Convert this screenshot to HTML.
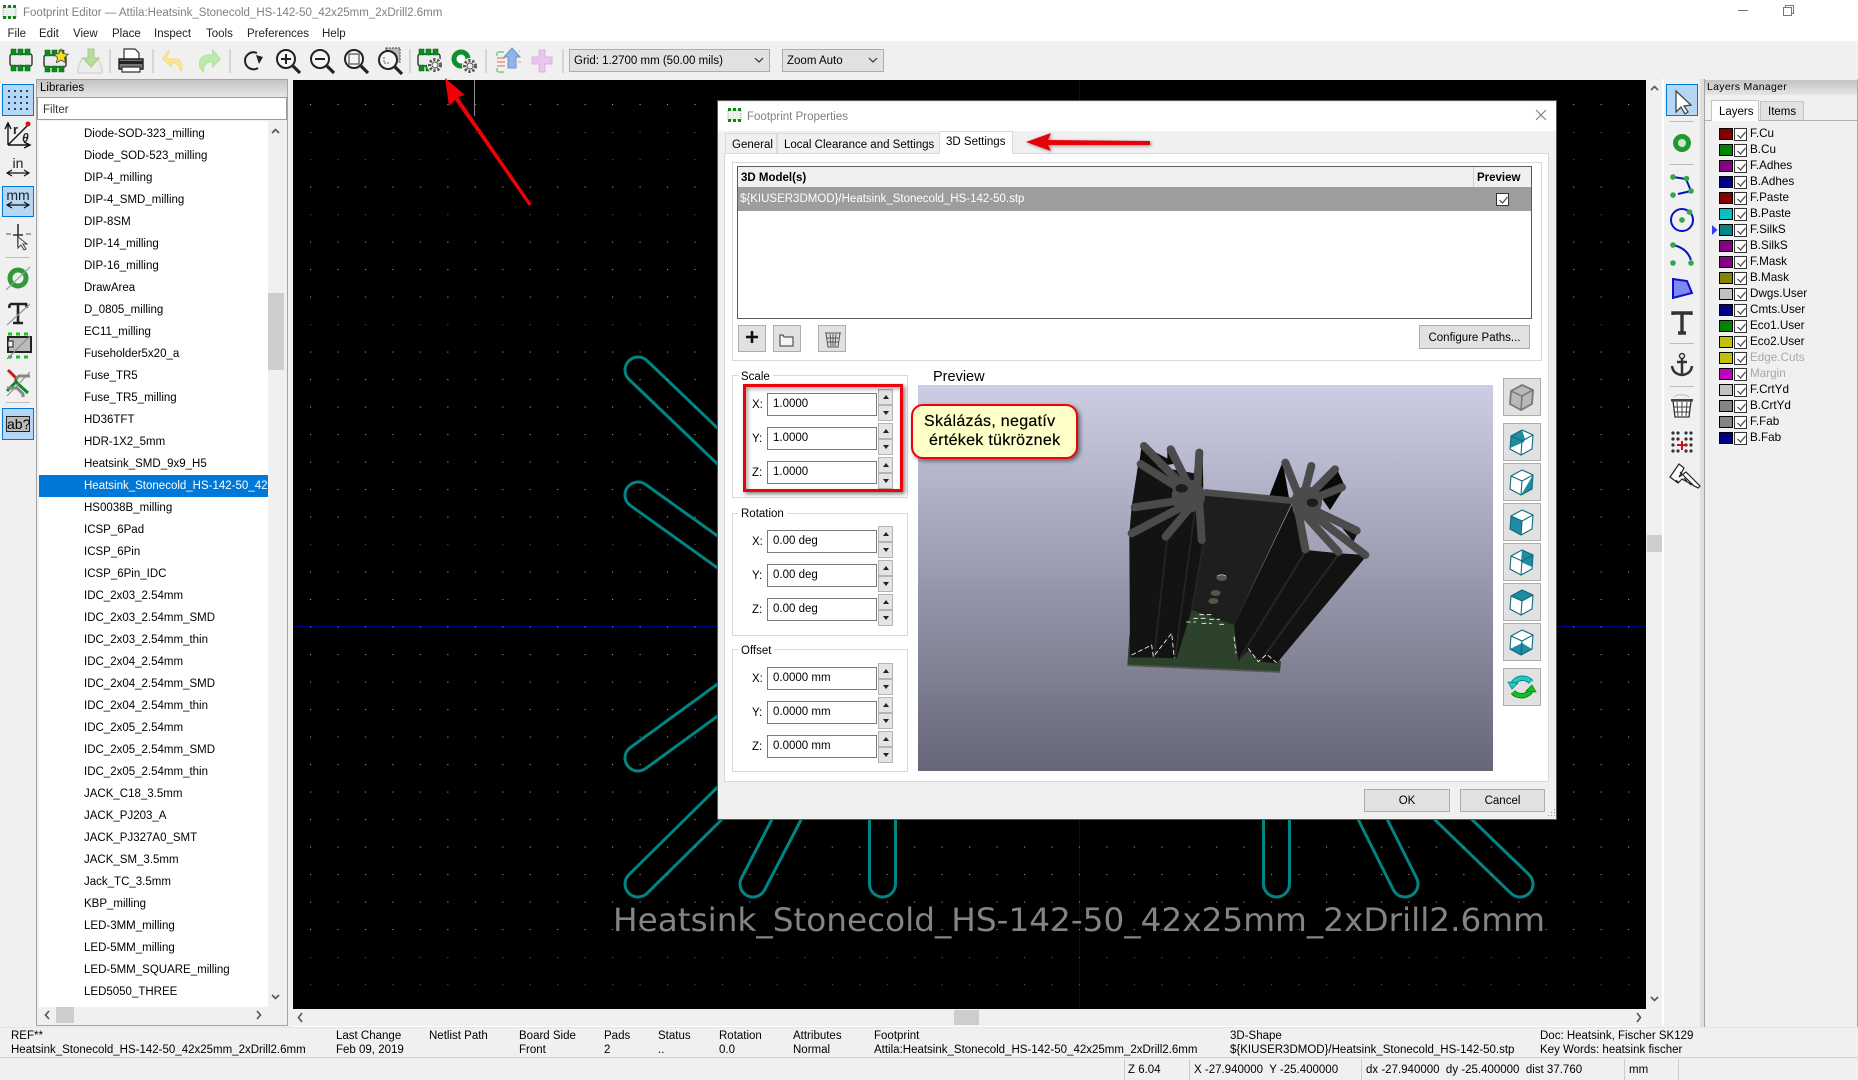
<!DOCTYPE html>
<html lang="en"><head><meta charset="utf-8"><title>Footprint Editor</title>
<style>
html,body{margin:0;padding:0;width:1858px;height:1080px;overflow:hidden;background:#f0f0f0}
body{position:relative;font:11.5px/16px "Liberation Sans",sans-serif;color:#000}
div,svg{position:absolute;box-sizing:border-box}
svg{overflow:visible}
.t{white-space:nowrap}
.hl{background:#b5d7f5;border:1.5px solid #0078d7}
.sep{background:#bbb}
.list{left:39px;top:121px;width:229px;height:886px;background:#fff;overflow:hidden;padding-top:2px}
.list div{position:relative;display:block;height:22px;line-height:22px;padding-left:45px;white-space:nowrap}
.list .sel{background:#0078d7;color:#fff}
.lrow{left:1719px;width:130px;height:16px}
.sw{left:0;top:2px;width:14px;height:12px;border:1px solid #000}
.cb{left:15px;top:2px;width:13px;height:13px;border:1px solid #333;background:#fff}
.ln{left:31px;top:0;line-height:16px;white-space:nowrap;font-size:11.7px}
.grp{left:732px;width:176px;height:123px;border:1px solid #d9d9d9}
.gl{background:#fff;padding:0 3px;white-space:nowrap;left:738px;height:14px;line-height:16px}
.inp{left:767px;width:110px;height:23px;border:1px solid #7a7a7a;background:#fff;padding-left:5px;line-height:21px;white-space:nowrap}
.xl{left:752px;white-space:nowrap;margin-top:1px}
.sp{left:878px;width:15px;height:16px;background:#e4e4e4;border:1px solid #b4b4b4}
.sp:before{content:"";position:absolute;left:4px;top:5px;border-left:3px solid transparent;border-right:3px solid transparent;border-bottom:4px solid #222}
.sp.d:before{border-bottom:0;border-top:4px solid #222}
.btn{background:#e1e1e1;border:1px solid #adadad;text-align:center}
.v3{left:1503px;width:38px;height:38px;background:#e1e1e1;border:1.5px solid #adadad}
.msg{white-space:nowrap;line-height:15px}
.sbs{top:1059px;width:1px;height:21px;background:#ccc}
</style></head><body>

<!-- window chrome -->
<div style="left:0;top:0;width:1858px;height:41px;background:#fff"></div>
<div class="t" style="left:23px;top:4.5px;color:#808080">Footprint Editor — Attila:Heatsink_Stonecold_HS-142-50_42x25mm_2xDrill2.6mm</div>
<div class="t" style="left:7.5px;top:26px;color:#222">File</div>
<div class="t" style="left:39px;top:26px;color:#222">Edit</div>
<div class="t" style="left:73px;top:26px;color:#222">View</div>
<div class="t" style="left:112px;top:26px;color:#222">Place</div>
<div class="t" style="left:154px;top:26px;color:#222">Inspect</div>
<div class="t" style="left:206px;top:26px;color:#222">Tools</div>
<div class="t" style="left:247px;top:26px;color:#222">Preferences</div>
<div class="t" style="left:322px;top:26px;color:#222">Help</div>
<svg style="left:0;top:0" width="1858" height="30">
<path d="M1738 10.5h10" stroke="#777" fill="none"/>
<path d="M1783.5 7.5h8v8h-8zM1785.5 7.5v-2h8v8h-2" stroke="#777" fill="none"/>
<g transform="translate(2,4)"><rect x="1" y="3" width="13" height="10" fill="#eee" stroke="#999" stroke-dasharray="1 1"/><path d="M1 1h3v3H1zM6 1h3v3H6zM11 1h3v3h-3zM1 12h3v3H1zM6 12h3v3H6zM11 12h3v3h-3z" fill="#0a8a0a"/></g>
</svg>

<!-- top toolbar -->
<svg style="left:0;top:0" width="1858" height="80" fill="none">
<defs>
<g id="chip"><rect x="-11" y="-6" width="22" height="12" rx="2" fill="#ececec" stroke="#333" stroke-width="1.4"/>
<path d="M-10-11h5v6h-5zM-3-11h5v6h-5zM4-11h5v6H4zM-10 5h5v6h-5zM-3 5h5v6h-5zM4 5h5v6H4z" fill="#0b8f0b" stroke="#063" stroke-width=".6"/></g>
<g id="mag"><circle cx="-2" cy="-2" r="9" fill="#f6f6f6" stroke="#222" stroke-width="2"/><path d="M5 5l7 7" stroke="#222" stroke-width="3.2"/></g>
<g id="gear"><circle r="8" fill="#f0f0f0"/><circle r="5.5" fill="none" stroke="#555" stroke-width="3" stroke-dasharray="2.2 1.8"/><circle r="3" fill="#eee" stroke="#555"/></g>
</defs>
<use href="#chip" x="21" y="60"/>
<use href="#chip" x="55" y="61"/><path d="M61 49l2.2 4.6 5 .6-3.7 3.4 1 5-4.5-2.5-4.5 2.5 1-5-3.7-3.4 5-.6z" fill="#f4dc1e" stroke="#444" stroke-width=".8"/>
<path d="M78 74l4-10h16l4 10v5H78z" fill="#ececec" stroke="#ccc" transform="translate(0,-6)"/><path d="M88 49h6v9h5l-8 9-8-9h5z" fill="#b6dd9a" stroke="#a2cc88"/>
<rect x="109.500" y="49" width="1" height="24" fill="#bbb"/>
<g transform="translate(131,60)"><path d="M-7-11h11l4 4v7H-7z" fill="#fff" stroke="#333" stroke-width="1.2"/><path d="M-12-1h24v10h-24z" fill="#777" stroke="#222" stroke-width="1.4"/><path d="M-12 1h24v3h-24z" fill="#222"/><path d="M-9 7h18v5H-9z" fill="#fff" stroke="#333" stroke-width="1.2"/></g>
<rect x="152.500" y="49" width="1" height="24" fill="#bbb"/>
<path transform="translate(3.500,0)" d="M166 50l-3 8 3 1h8q6 3 4 12q-1 0-3-5q-2-3-7-3v4l-9-8.500z" fill="#fbe58e" stroke="#f2dc86"/>
<path transform="translate(-3.500,0)" d="M216 50l8 9-8 8v-5h-3q-6 1-6 10q-5-4-4-10q1-7 10-7h3z" fill="#bfe9aa" stroke="#b0e29e"/>
<rect x="229.500" y="49" width="1" height="24" fill="#bbb"/>
<path d="M257 53a8.500 8.500 0 1 0 1 15" stroke="#222" stroke-width="2"/><path d="M257 58l3 9 4-7z" fill="#222" transform="translate(-1,-3)"/>
<use href="#mag" x="288" y="61"/><path d="M281 59h10M286 54v10" stroke="#222" stroke-width="2"/>
<use href="#mag" x="322" y="61"/><path d="M315 59h10" stroke="#222" stroke-width="2"/>
<use href="#mag" x="356" y="61"/><rect x="349" y="54" width="10" height="10" stroke="#666" stroke-width="1.4"/>
<rect x="386" y="48" width="14" height="14" fill="#bbb" stroke="#444" stroke-dasharray="2 1"/>
<use href="#mag" x="390" y="62"/><path d="M384 57v6h6" stroke="#666" stroke-dasharray="2 1"/>
<rect x="409.500" y="49" width="1" height="24" fill="#bbb"/>
<use href="#chip" x="429" y="60"/><use href="#gear" x="435" y="65"/>
<circle cx="461" cy="59" r="7" stroke="#0c8f2c" stroke-width="5" fill="#fff"/><use href="#gear" x="470" y="66"/>
<rect x="485.500" y="49" width="1" height="24" fill="#bbb"/>
<path d="M498 52h6M498 72h6M497 52v4M497 68v4" stroke="#7cc48a" stroke-width="1.5"/><path d="M497 58h8M497 62h8M497 66h8" stroke="#e09a7a" stroke-width="1.5"/><path d="M512 48l8 9h-4v11h-8V57h-4z" fill="#8fb5e8" stroke="#6a94cc"/><path d="M519 51h1M518 62h3" stroke="#e09a7a"/>
<path d="M539 50h6v7h7v7h-7v8h-6v-8h-7v-7h7z" fill="#e9c4ee" stroke="#dcb2e2"/>
<rect x="562.500" y="49" width="1" height="24" fill="#bbb"/>
</svg>
<div style="left:569px;top:49px;width:201px;height:23px;background:#e1e1e1;border:1px solid #adadad;padding:4px 4px;white-space:nowrap;line-height:15px">Grid: 1.2700 mm (50.00 mils)</div>
<div style="left:782px;top:49px;width:102px;height:23px;background:#e1e1e1;border:1px solid #adadad;padding:4px 4px;white-space:nowrap;line-height:15px">Zoom Auto</div>
<svg style="left:0;top:0" width="1858" height="80" fill="none"><path d="M755 58l4 4 4-4M869 58l4 4 4-4" stroke="#333" stroke-width="1.2"/></svg>

<!-- left toolbar -->
<div class="hl" style="left:2px;top:84px;width:32px;height:32px"></div>
<div class="hl" style="left:2px;top:186px;width:32px;height:31px"></div>
<div class="sep" style="left:6px;top:257px;width:24px;height:1px"></div>
<div class="sep" style="left:6px;top:402px;width:24px;height:1px"></div>
<div class="hl" style="left:2px;top:408px;width:32px;height:32px"></div>
<svg style="left:0;top:80px" width="36" height="370" fill="none">
<g fill="#24476a"><rect x="8" y="10" width="2" height="2"/><rect x="14" y="10" width="2" height="2"/><rect x="20" y="10" width="2" height="2"/><rect x="26" y="10" width="2" height="2"/>
<rect x="8" y="16" width="2" height="2"/><rect x="14" y="16" width="2" height="2"/><rect x="20" y="16" width="2" height="2"/><rect x="26" y="16" width="2" height="2"/>
<rect x="8" y="22" width="2" height="2"/><rect x="14" y="22" width="2" height="2"/><rect x="20" y="22" width="2" height="2"/><rect x="26" y="22" width="2" height="2"/>
<rect x="8" y="28" width="2" height="2"/><rect x="14" y="28" width="2" height="2"/><rect x="20" y="28" width="2" height="2"/><rect x="26" y="28" width="2" height="2"/></g>
<path d="M8 65V44M5 49l3-6 3 6M8 65h21M24 62l6 3-6 3M8 65L27 46" stroke="#111" stroke-width="1.4"/><circle cx="28" cy="44" r="2.500" fill="#e01010"/>
<text x="13" y="54" font-family="Liberation Sans" font-size="13" font-weight="bold" fill="#222">r</text>
<text x="22" y="62" font-family="Liberation Sans" font-size="12" font-weight="bold" font-style="italic" fill="#222">θ</text>
<path d="M8 93h20M12 90l-5 3 5 3M24 90l5 3-5 3M8 125h20M12 122l-5 3 5 3M24 122l5 3-5 3" stroke="#111" stroke-width="1.200"/>
<text x="18" y="88" text-anchor="middle" font-family="Liberation Sans" font-size="14" fill="#222">in</text>
<text x="18" y="120" text-anchor="middle" font-family="Liberation Sans" font-size="14" fill="#222">mm</text>
<path d="M13 155h10M18 144v20M18 167v-4" stroke="#333" stroke-width="1.6"/><path d="M6 154h5M26 154h5" stroke="#888" stroke-width="1.6"/><path d="M18 157v11l3-3 3 5 2-1-3-5h4z" fill="#eee" stroke="#444"/>
<circle cx="18" cy="198" r="8" stroke="#2f9a3a" stroke-width="5" fill="#e8f4e8"/><path d="M6 210L30 187" stroke="#999" stroke-width="1.2"/>
<path d="M10 224h16l1 4M10 224l-1 4M18 224v19M13 243h10" stroke="#222" stroke-width="2.6"/><path d="M7 245L30 224" stroke="#999" stroke-width="1.2"/>
<rect x="8" y="257" width="23" height="15" fill="#bbb" stroke="#222" stroke-width="2"/><rect x="8" y="261" width="5" height="6" fill="#eee" stroke="#222"/><path d="M8 254h4M16 254h4M24 254h4M8 277h4M16 277h4M24 277h4" stroke="#1bc41b" stroke-width="3"/><path d="M7 279L30 256" stroke="#888" stroke-width="1.2"/>
<path d="M8 290l8 8 0 6 " stroke="#c02020" stroke-width="3"/><path d="M30 296H19l-3 3" stroke="#888" stroke-width="3"/><path d="M7 311l9-9 12 11" stroke="#0b8a2a" stroke-width="3"/><path d="M7 308h10l6 6v3" stroke="#888" stroke-width="3"/><path d="M7 316L30 292" stroke="#888" stroke-width="1"/>
</svg>
<div style="left:6px;top:416px;width:24px;height:16px;background:#bbb;border:1px solid #222;font-size:14px;line-height:14px;text-align:center;color:#000">ab?</div>

<!-- libraries panel -->
<div style="left:36px;top:79px;width:252px;height:947px;background:#f0f0f0;border:1.5px solid #a5a5a5"></div>
<div style="left:37px;top:80px;width:250px;height:17px;background:linear-gradient(#c4c4c4,#e6e6e6)"></div>
<div class="t" style="left:40px;top:78.5px;line-height:18px">Libraries</div>
<div style="left:37px;top:97px;width:250px;height:23px;background:#fff;border:1px solid #9a9a9a;padding:4px 5px;color:#333">Filter</div>
<div class="list">
<div>Diode-SOD-323_milling</div><div>Diode_SOD-523_milling</div><div>DIP-4_milling</div><div>DIP-4_SMD_milling</div><div>DIP-8SM</div><div>DIP-14_milling</div><div>DIP-16_milling</div><div>DrawArea</div><div>D_0805_milling</div><div>EC11_milling</div><div>Fuseholder5x20_a</div><div>Fuse_TR5</div><div>Fuse_TR5_milling</div><div>HD36TFT</div><div>HDR-1X2_5mm</div><div>Heatsink_SMD_9x9_H5</div><div class="sel">Heatsink_Stonecold_HS-142-50_42x25mm_2xDrill2.6mm</div><div>HS0038B_milling</div><div>ICSP_6Pad</div><div>ICSP_6Pin</div><div>ICSP_6Pin_IDC</div><div>IDC_2x03_2.54mm</div><div>IDC_2x03_2.54mm_SMD</div><div>IDC_2x03_2.54mm_thin</div><div>IDC_2x04_2.54mm</div><div>IDC_2x04_2.54mm_SMD</div><div>IDC_2x04_2.54mm_thin</div><div>IDC_2x05_2.54mm</div><div>IDC_2x05_2.54mm_SMD</div><div>IDC_2x05_2.54mm_thin</div><div>JACK_C18_3.5mm</div><div>JACK_PJ203_A</div><div>JACK_PJ327A0_SMT</div><div>JACK_SM_3.5mm</div><div>Jack_TC_3.5mm</div><div>KBP_milling</div><div>LED-3MM_milling</div><div>LED-5MM_milling</div><div>LED-5MM_SQUARE_milling</div><div>LED5050_THREE</div>
</div>
<div style="left:268px;top:121px;width:16px;height:886px;background:#f0f0f0"></div>
<div style="left:268px;top:293px;width:16px;height:77px;background:#cdcdcd"></div>
<div style="left:56px;top:1007px;width:18px;height:16px;background:#cdcdcd"></div>
<svg style="left:0;top:0" width="300" height="1080" fill="none" stroke="#555" stroke-width="1.6"><path d="M272 133l3.500-3.500 3.500 3.500M272 995l3.500 3.500 3.500-3.500M49 1011l-3.500 4 3.500 4M257 1011l3.500 4-3.500 4"/></svg>

<!-- canvas -->
<svg style="left:293px;top:80px" width="1353" height="929" viewBox="293 80 1353 929" fill="none">
<defs><pattern id="d" x="310" y="104" width="27.46" height="27.5" patternUnits="userSpaceOnUse"><rect width="1.1" height="1.1" fill="#9a9a9a"/></pattern></defs>
<rect x="293" y="80" width="1353" height="929" fill="#000"/>
<path d="M1079.500 80v929M293 626.500h1353" stroke="#000084" stroke-width="1"/>
<path d="M474.500 80v36" stroke="#8a8a8a" stroke-width="1"/>
<g stroke-linecap="round">
<g stroke="#008484" stroke-width="29">
<path d="M638 370L800 525M638 495L800 611M638 758L800 640M638 884L800 724M753 884L805 784M882.500 884V800M1276.500 884V800M1405 884L1355 784M1520 884L1400 768"/></g>
<g stroke="#000" stroke-width="23">
<path d="M638 370L800 525M638 495L800 611M638 758L800 640M638 884L800 724M753 884L805 784M882.500 884V800M1276.500 884V800M1405 884L1355 784M1520 884L1400 768"/></g>
</g>
<rect x="293" y="80" width="1353" height="929" fill="url(#d)"/>
<text x="613" y="931" font-family="DejaVu Sans" font-size="32" fill="#848484" textLength="932" lengthAdjust="spacingAndGlyphs">Heatsink_Stonecold_HS-142-50_42x25mm_2xDrill2.6mm</text>
</svg>

<!-- canvas scrollbars -->
<div style="left:1647px;top:535px;width:15px;height:17px;background:#cdcdcd"></div>
<div style="left:954px;top:1010px;width:25px;height:15px;background:#cdcdcd"></div>
<div style="left:1662px;top:79px;width:2px;height:947px;background:#fff"></div>
<div style="left:293px;top:1026px;width:1353px;height:1px;background:#fff"></div>
<svg style="left:0;top:0" width="1858" height="1080" fill="none" stroke="#555" stroke-width="1.6"><path d="M1651 90l3.500-3.500 3.500 3.500M1651 997l3.500 3.500 3.500-3.500M302 1013l-3.500 4.500 3.500 4.500M1637 1013l3.500 4.500-3.500 4.500"/></svg>

<!-- right toolbar -->
<div class="hl" style="left:1666px;top:84px;width:32px;height:32px"></div>
<div class="sep" style="left:1670px;top:121px;width:24px;height:1px"></div>
<div class="sep" style="left:1670px;top:164px;width:24px;height:1px"></div>
<div class="sep" style="left:1670px;top:343px;width:24px;height:1px"></div>
<div class="sep" style="left:1670px;top:386px;width:24px;height:1px"></div>
<div style="left:1700px;top:79px;width:4px;height:948px;background:#dedede"></div>
<svg style="left:0;top:0" width="1858" height="1080" fill="none">
<path d="M1676 91l0 21 5-5 4 7 3-2-4-6 7-1z" fill="#fff" stroke="#444" stroke-width="1.3"/>
<circle cx="1682" cy="143" r="6.500" stroke="#1f9a2e" stroke-width="5" fill="#cfe8cf"/>
<path d="M1673 177l13 2 5 12-13 3" stroke="#0a10c8" stroke-width="2"/><g fill="#2fa84a"><circle cx="1673" cy="177" r="2.800"/><circle cx="1686.500" cy="178.500" r="2.800"/><circle cx="1691" cy="191" r="2.800"/><circle cx="1673" cy="195" r="2.800"/></g>
<circle cx="1682" cy="220" r="11" stroke="#0a10c8" stroke-width="2"/><circle cx="1682" cy="220" r="2.800" fill="#2fa84a"/><circle cx="1689.500" cy="212" r="2.800" fill="#2fa84a"/>
<path d="M1673 245q14 3 18 15" stroke="#0a10c8" stroke-width="2"/><circle cx="1673" cy="245" r="2.800" fill="#2fa84a"/><circle cx="1691" cy="263" r="2.800" fill="#2fa84a"/><circle cx="1673" cy="263" r="2.800" fill="#2fa84a"/>
<path d="M1673 279l14 2 5 12-19 5z" fill="#7d88f2" stroke="#0a10c8" stroke-width="2"/>
<path d="M1673 315v-2h18v2M1682 313v20M1678 333h8" stroke="#333" stroke-width="3.400"/>
<circle cx="1682" cy="356" r="2.500" stroke="#333" stroke-width="1.500"/><path d="M1682 359v15M1677 362h10" stroke="#333" stroke-width="2.500"/><path d="M1672 366q1 8 10 9q9-1 10-9" stroke="#333" stroke-width="2.500"/>
<path d="M1673 401h18l-2 16h-14z" fill="#fff" stroke="#333" stroke-width="1.300"/><path d="M1671 399h22v2.500h-22z" fill="#444"/><path d="M1677 402l1 14M1682 402v14M1687 402l-1 14M1674 407h16M1675 412h14" stroke="#444"/><path d="M1674 397q3-3 7-2q5-1 8 2" stroke="#bbb"/>
<g fill="#333"><circle cx="1673" cy="433" r="1.600"/><circle cx="1678" cy="433" r="1.600"/><circle cx="1686" cy="433" r="1.600"/><circle cx="1691" cy="433" r="1.600"/><circle cx="1673" cy="439" r="1.600"/><circle cx="1678" cy="439" r="1.600"/><circle cx="1686" cy="439" r="1.600"/><circle cx="1691" cy="439" r="1.600"/><circle cx="1673" cy="445" r="1.600"/><circle cx="1686" cy="445" r="1.600"/><circle cx="1691" cy="445" r="1.600"/><circle cx="1673" cy="451" r="1.600"/><circle cx="1678" cy="451" r="1.600"/><circle cx="1686" cy="451" r="1.600"/><circle cx="1691" cy="451" r="1.600"/></g><path d="M1682 441v9M1677 445h10" stroke="#d01010" stroke-width="2"/>
<path d="M1670 477l9-13 5 4-5 9 7-5 14 14-2 2-16-9-4 4zM1680 472l14 14M1676 480l3 3M1684 478l3 3M1688 482l3 3" stroke="#222" stroke-width="1.200" fill="#fff"/>
</svg>

<!-- layers manager -->
<div style="left:1704px;top:79px;width:154px;height:948px;background:#f0f0f0;border-left:1.5px solid #a5a5a5;border-right:1px solid #aaa"></div>
<div style="left:1705px;top:80px;width:152px;height:15px;background:linear-gradient(#c4c4c4,#e6e6e6)"></div>
<div class="t" style="left:1707px;top:79px;line-height:17px;font-size:10.5px;letter-spacing:.3px">Layers Manager</div>
<div style="left:1705px;top:120px;width:152px;height:1px;background:#b0b0b0"></div>
<div style="left:1711px;top:100px;width:48px;height:21px;background:#fff;border:1px solid #c4c4c4;border-bottom:0;padding-left:7px;line-height:22px">Layers</div>
<div style="left:1760px;top:101px;width:44px;height:19px;background:#e2e2e2;border:1px solid #c4c4c4;border-bottom:0;padding-left:7px;line-height:21px">Items</div>
<svg style="left:1712px;top:225px" width="6" height="10"><path d="M0 0l5.500 5-5.500 5z" fill="#3a3af0"/></svg>
<svg width="0" height="0" style="left:0;top:0"><defs><path id="ck" d="M2.500 6l3 3 5-6" fill="none" stroke="#444" stroke-width="1.200"/></defs></svg>
<div class="lrow" style="top:126px"><div class="sw" style="background:#840000"></div><div class="cb"><svg width="12" height="12"><use href="#ck"/></svg></div><div class="ln">F.Cu</div></div>
<div class="lrow" style="top:142px"><div class="sw" style="background:#008400"></div><div class="cb"><svg width="12" height="12"><use href="#ck"/></svg></div><div class="ln">B.Cu</div></div>
<div class="lrow" style="top:158px"><div class="sw" style="background:#840084"></div><div class="cb"><svg width="12" height="12"><use href="#ck"/></svg></div><div class="ln">F.Adhes</div></div>
<div class="lrow" style="top:174px"><div class="sw" style="background:#000084"></div><div class="cb"><svg width="12" height="12"><use href="#ck"/></svg></div><div class="ln">B.Adhes</div></div>
<div class="lrow" style="top:190px"><div class="sw" style="background:#840000"></div><div class="cb"><svg width="12" height="12"><use href="#ck"/></svg></div><div class="ln">F.Paste</div></div>
<div class="lrow" style="top:206px"><div class="sw" style="background:#00c2c2"></div><div class="cb"><svg width="12" height="12"><use href="#ck"/></svg></div><div class="ln">B.Paste</div></div>
<div class="lrow" style="top:222px"><div class="sw" style="background:#008484"></div><div class="cb"><svg width="12" height="12"><use href="#ck"/></svg></div><div class="ln">F.SilkS</div></div>
<div class="lrow" style="top:238px"><div class="sw" style="background:#840084"></div><div class="cb"><svg width="12" height="12"><use href="#ck"/></svg></div><div class="ln">B.SilkS</div></div>
<div class="lrow" style="top:254px"><div class="sw" style="background:#840084"></div><div class="cb"><svg width="12" height="12"><use href="#ck"/></svg></div><div class="ln">F.Mask</div></div>
<div class="lrow" style="top:270px"><div class="sw" style="background:#848400"></div><div class="cb"><svg width="12" height="12"><use href="#ck"/></svg></div><div class="ln">B.Mask</div></div>
<div class="lrow" style="top:286px"><div class="sw" style="background:#c2c2c2"></div><div class="cb"><svg width="12" height="12"><use href="#ck"/></svg></div><div class="ln">Dwgs.User</div></div>
<div class="lrow" style="top:302px"><div class="sw" style="background:#000084"></div><div class="cb"><svg width="12" height="12"><use href="#ck"/></svg></div><div class="ln">Cmts.User</div></div>
<div class="lrow" style="top:318px"><div class="sw" style="background:#008400"></div><div class="cb"><svg width="12" height="12"><use href="#ck"/></svg></div><div class="ln">Eco1.User</div></div>
<div class="lrow" style="top:334px"><div class="sw" style="background:#c2c200"></div><div class="cb"><svg width="12" height="12"><use href="#ck"/></svg></div><div class="ln">Eco2.User</div></div>
<div class="lrow" style="top:350px"><div class="sw" style="background:#c2c200"></div><div class="cb"><svg width="12" height="12"><use href="#ck"/></svg></div><div class="ln" style="color:#a8a8a8">Edge.Cuts</div></div>
<div class="lrow" style="top:366px"><div class="sw" style="background:#c200c2"></div><div class="cb"><svg width="12" height="12"><use href="#ck"/></svg></div><div class="ln" style="color:#a8a8a8">Margin</div></div>
<div class="lrow" style="top:382px"><div class="sw" style="background:#c2c2c2"></div><div class="cb"><svg width="12" height="12"><use href="#ck"/></svg></div><div class="ln">F.CrtYd</div></div>
<div class="lrow" style="top:398px"><div class="sw" style="background:#848484"></div><div class="cb"><svg width="12" height="12"><use href="#ck"/></svg></div><div class="ln">B.CrtYd</div></div>
<div class="lrow" style="top:414px"><div class="sw" style="background:#848484"></div><div class="cb"><svg width="12" height="12"><use href="#ck"/></svg></div><div class="ln">F.Fab</div></div>
<div class="lrow" style="top:430px"><div class="sw" style="background:#000084"></div><div class="cb"><svg width="12" height="12"><use href="#ck"/></svg></div><div class="ln">B.Fab</div></div>

<!-- message panel -->
<div style="left:0;top:1027px;width:1858px;height:1px;background:#e4e4e4"></div>
<div style="left:0;top:1057px;width:1858px;height:1px;background:#cfcfcf"></div>
<div class="msg" style="left:11px;top:1029px">REF**</div><div class="msg" style="left:11px;top:1043px">Heatsink_Stonecold_HS-142-50_42x25mm_2xDrill2.6mm</div>
<div class="msg" style="left:336px;top:1029px">Last Change</div><div class="msg" style="left:336px;top:1043px">Feb 09, 2019</div>
<div class="msg" style="left:429px;top:1029px">Netlist Path</div>
<div class="msg" style="left:519px;top:1029px">Board Side</div><div class="msg" style="left:519px;top:1043px">Front</div>
<div class="msg" style="left:604px;top:1029px">Pads</div><div class="msg" style="left:604px;top:1043px">2</div>
<div class="msg" style="left:658px;top:1029px">Status</div><div class="msg" style="left:658px;top:1043px">..</div>
<div class="msg" style="left:719px;top:1029px">Rotation</div><div class="msg" style="left:719px;top:1043px">0.0</div>
<div class="msg" style="left:793px;top:1029px">Attributes</div><div class="msg" style="left:793px;top:1043px">Normal</div>
<div class="msg" style="left:874px;top:1029px">Footprint</div><div class="msg" style="left:874px;top:1043px">Attila:Heatsink_Stonecold_HS-142-50_42x25mm_2xDrill2.6mm</div>
<div class="msg" style="left:1230px;top:1029px">3D-Shape</div><div class="msg" style="left:1230px;top:1043px">${KIUSER3DMOD}/Heatsink_Stonecold_HS-142-50.stp</div>
<div class="msg" style="left:1540px;top:1029px">Doc: Heatsink, Fischer SK129</div><div class="msg" style="left:1540px;top:1043px">Key Words: heatsink fischer</div>
<div class="sbs" style="left:1124px"></div><div class="sbs" style="left:1189px"></div><div class="sbs" style="left:1361px"></div><div class="sbs" style="left:1624px"></div><div class="sbs" style="left:1678px"></div>
<div class="msg" style="left:1128px;top:1063px">Z 6.04</div>
<div class="msg" style="left:1194px;top:1063px">X -27.940000&nbsp; Y -25.400000</div>
<div class="msg" style="left:1366px;top:1063px">dx -27.940000&nbsp; dy -25.400000&nbsp; dist 37.760</div>
<div class="msg" style="left:1629px;top:1063px">mm</div>

<!-- dialog -->
<div style="left:718px;top:101px;width:838px;height:718px;background:#f0f0f0;box-shadow:0 0 0 1px #555"></div>
<div style="left:718px;top:102px;width:838px;height:29px;background:#fff"></div>
<svg style="left:727px;top:107px" width="15" height="16"><rect x="1" y="3" width="13" height="10" fill="#eee" stroke="#999" stroke-dasharray="1 1"/><path d="M1 1h3v3H1zM6 1h3v3H6zM11 1h3v3h-3zM1 12h3v3H1zM6 12h3v3H6zM11 12h3v3h-3z" fill="#0a8a0a"/></svg>
<div class="t" style="left:747px;top:109px;color:#808080">Footprint Properties</div>
<svg style="left:1535px;top:109px" width="12" height="12"><path d="M1 1l10 10M11 1L1 11" stroke="#777" fill="none"/></svg>
<div style="left:724px;top:153px;width:825px;height:629px;background:#fff;border:1px solid #d9d9d9"></div>
<div style="left:725px;top:133px;width:52px;height:20px;background:#f0f0f0;border:1px solid #d9d9d9;border-bottom:0;padding-left:6px;line-height:22px">General</div>
<div style="left:777px;top:133px;width:163px;height:20px;background:#f0f0f0;border:1px solid #d9d9d9;border-bottom:0;padding-left:6px;line-height:22px;white-space:nowrap">Local Clearance and Settings</div>
<div style="left:939px;top:131px;width:74px;height:23px;background:#fff;border:1px solid #d9d9d9;border-bottom:0;padding-left:6px;line-height:21px;white-space:nowrap">3D Settings</div>

<div style="left:732px;top:162px;width:810px;height:199px;border:1px solid #d9d9d9"></div>
<div style="left:737px;top:166px;width:795px;height:153px;border:1px solid #5a5a5a;background:#fff"></div>
<div style="left:738px;top:167px;width:793px;height:20px;background:#f0f0f0"></div>
<div style="left:1473px;top:167px;width:1px;height:20px;background:#cfcfcf"></div>
<div class="t" style="left:741px;top:170px;font-weight:bold">3D Model(s)</div>
<div class="t" style="left:1477px;top:170px;font-weight:bold">Preview</div>
<div style="left:738px;top:187px;width:793px;height:24px;background:#9d9d9d"></div>
<div class="t" style="left:740px;top:191px;color:#fff">${KIUSER3DMOD}/Heatsink_Stonecold_HS-142-50.stp</div>
<div class="cb" style="left:1496px;top:193px"><svg width="12" height="12"><use href="#ck"/></svg></div>

<div class="btn" style="left:738px;top:325px;width:28px;height:27px"></div>
<div class="btn" style="left:773px;top:325px;width:28px;height:27px"></div>
<div class="btn" style="left:818px;top:325px;width:28px;height:27px"></div>
<svg style="left:730px;top:320px" width="130" height="40" fill="none">
<path d="M22 11v12M16 17h12" stroke="#111" stroke-width="2.600"/>
<path d="M50 15h3l1 2h9v9H50z" stroke="#333" fill="#f4f4f4"/>
<path d="M96 13h14l-2 14H98zM95 13h16M100 14l1 12M103 14v12M106 14l-1 12M97 18h12M98 22h10" stroke="#555"/>
</svg>
<div class="btn" style="left:1419px;top:325px;width:111px;height:24px;line-height:24px;white-space:nowrap">Configure Paths...</div>

<div class="grp" style="top:375px"></div><div class="gl" style="top:369px">Scale</div>
<div class="grp" style="top:513px"></div><div class="gl" style="top:506px">Rotation</div>
<div class="grp" style="top:649px"></div><div class="gl" style="top:643px">Offset</div>

<div class="inp" style="top:393px">1.0000</div><div class="xl" style="top:396px">X:</div><div class="sp" style="top:389px"></div><div class="sp d" style="top:405px"></div>
<div class="inp" style="top:427px">1.0000</div><div class="xl" style="top:430px">Y:</div><div class="sp" style="top:423px"></div><div class="sp d" style="top:439px"></div>
<div class="inp" style="top:461px">1.0000</div><div class="xl" style="top:464px">Z:</div><div class="sp" style="top:457px"></div><div class="sp d" style="top:473px"></div>
<div class="inp" style="top:530px">0.00 deg</div><div class="xl" style="top:533px">X:</div><div class="sp" style="top:526px"></div><div class="sp d" style="top:542px"></div>
<div class="inp" style="top:564px">0.00 deg</div><div class="xl" style="top:567px">Y:</div><div class="sp" style="top:560px"></div><div class="sp d" style="top:576px"></div>
<div class="inp" style="top:598px">0.00 deg</div><div class="xl" style="top:601px">Z:</div><div class="sp" style="top:594px"></div><div class="sp d" style="top:610px"></div>
<div class="inp" style="top:667px">0.0000 mm</div><div class="xl" style="top:670px">X:</div><div class="sp" style="top:663px"></div><div class="sp d" style="top:679px"></div>
<div class="inp" style="top:701px">0.0000 mm</div><div class="xl" style="top:704px">Y:</div><div class="sp" style="top:697px"></div><div class="sp d" style="top:713px"></div>
<div class="inp" style="top:735px">0.0000 mm</div><div class="xl" style="top:738px">Z:</div><div class="sp" style="top:731px"></div><div class="sp d" style="top:747px"></div>

<div class="t" style="left:933px;top:368px;font-size:14.5px;line-height:18px">Preview</div>
<div style="left:918px;top:385px;width:575px;height:386px;background:linear-gradient(#cdcde4,#666678)"></div>

<!-- 3D model -->
<svg style="left:1080px;top:420px" width="340" height="280" viewBox="0 0 1020 840" fill="none">
<polygon points="148,645 142,735 600,755 603,725 462,615 445,570 335,560 300,640" fill="#2c422a"/>
<path d="M142 736L600 756" stroke="#555" stroke-width="5"/>
<polygon points="372,222 635,250 462,615 335,570" fill="#1e1e1e"/>
<polygon points="175,130 345,160 372,222 372,360 335,570 290,715 215,712 150,712 148,340 155,260" fill="#131313"/>
<polygon points="185,75 290,130 175,150" fill="#0d0d0d"/><polygon points="262,85 300,135 262,120" fill="#0d0d0d"/><polygon points="342,160 350,90 368,90 370,220" fill="#0a0a0a"/>
<path d="M262 352L222 712M345 270L285 715M372 360L335 570" stroke="#262626" stroke-width="5"/>
<polygon points="568,228 608,125 630,250" fill="#060606"/>
<polygon points="635,255 678,390 780,400 862,405 590,730 540,725 505,690 475,722 462,615" fill="#121212"/>
<polygon points="700,200 770,145 795,200 750,270" fill="#0a0a0a"/><polygon points="750,280 838,330 820,365" fill="#101010"/>
<path d="M678 392L475 722M778 400L540 725" stroke="#262626" stroke-width="6"/>
<g stroke="#4b4b4b" stroke-width="24" stroke-linecap="round">
<path d="M345 235L192 78M345 235L272 88M350 235L358 98M345 235L182 132M345 235L164 262M345 240L155 340M345 245L257 350M358 250L365 360"/>
<path d="M665 250L616 128M665 250L694 138M665 250L765 148M665 250L786 202M680 260L830 332M680 270L856 405M670 280L775 396M650 250L676 388"/>
<path d="M372 217L635 242" stroke-linecap="butt" stroke-width="20"/>
</g>
<circle cx="325" cy="228" r="50" fill="#4b4b4b"/><circle cx="680" cy="245" r="46" fill="#4b4b4b"/>
<g fill="#1c1c1c"><ellipse cx="305" cy="205" rx="18" ry="13"/><ellipse cx="697" cy="248" rx="17" ry="13"/></g>
<ellipse cx="425" cy="473" rx="16" ry="10" fill="#555"/><path d="M412 468q13-8 26 0" stroke="#ddd" stroke-width="2"/>
<ellipse cx="407" cy="519" rx="15" ry="9" fill="#4f5a4a"/><ellipse cx="400" cy="543" rx="15" ry="9" fill="#4f5a4a"/>
<path d="M155 705l60-30 5 35 55-70 8 75M462 650l6 50M505 685l30 40 25-22 30 25M340 595h40M388 598h32M318 606h30M365 610h30M418 613h15M358 584h40" stroke="#fff" stroke-width="2.500" stroke-dasharray="14 8"/>
</svg>

<!-- view buttons -->
<div class="v3" style="top:378px"></div><div class="v3" style="top:423px"></div><div class="v3" style="top:463px"></div><div class="v3" style="top:503px"></div><div class="v3" style="top:543px"></div><div class="v3" style="top:583px"></div><div class="v3" style="top:623px"></div><div class="v3" style="top:668px"></div>
<svg style="left:1503px;top:370px" width="38" height="340" fill="none">
<defs><g id="cb"><path d="M-11-6L0-12l11 5-1 14-11 6-11-6zM-1 13L0-1M-11-6L0-1l11-6" stroke="#0f6a7c" stroke-width="1.100"/></g></defs>
<g transform="translate(19,27)"><path d="M-11-6L0-12l11 5-1 14-11 6-11-6z" fill="#b9b9b9" stroke="#777" stroke-width="1.800"/><path d="M-11-6L0-1l11-6M0-1L-1 13" stroke="#777" stroke-width="1.500"/></g>
<g transform="translate(19,72)"><path d="M-11-6L0-12l11 5-1 14-11 6-11-6z" fill="#fff"/><path d="M-11-6L0-12 3-3l-1 3-14 6z" fill="#1f8ca4"/><use href="#cb"/></g>
<g transform="translate(19,112)"><path d="M-11-6L0-12l11 5-1 14-11 6-11-6z" fill="#fff"/><path d="M11-7L-1 13l11-6z" fill="#1f8ca4"/><use href="#cb"/></g>
<g transform="translate(19,152)"><path d="M-11-6L0-12l11 5-1 14-11 6-11-6z" fill="#fff"/><path d="M-11-6L0-1l-1 14-11-6z" fill="#1f8ca4"/><use href="#cb"/></g>
<g transform="translate(19,192)"><path d="M-11-6L0-12l11 5-1 14-11 6-11-6z" fill="#fff"/><path d="M0-12l11 5-1 12L-1 0z" fill="#1f8ca4"/><use href="#cb"/></g>
<g transform="translate(19,232)"><path d="M-11-6L0-12l11 5-1 14-11 6-11-6z" fill="#fff"/><path d="M-11-6L0-12l11 5L0-1z" fill="#1f8ca4"/><use href="#cb"/></g>
<g transform="translate(19,272)"><path d="M-11-6L0-12l11 5-1 14-11 6-11-6z" fill="#fff"/><path d="M-12 7L0 1l10 6-11 6z" fill="#1f8ca4"/><use href="#cb"/></g>
<g transform="translate(19,317)">
<path d="M-9-3a10 8 0 0 1 18-2" stroke="#0a7a78" stroke-width="5.500"/><path d="M-9-3a10 8 0 0 1 18-2" stroke="#1ccac8" stroke-width="3.800"/><path d="M-14-5l10 1-6 6z" fill="#1ccac8" stroke="#0a7a78" stroke-width=".7"/>
<path d="M9 3a10 8 0 0 1-18 2" stroke="#0a7a18" stroke-width="5.500"/><path d="M9 3a10 8 0 0 1-18 2" stroke="#10c020" stroke-width="3.800"/><path d="M14 5L4 4l6-6z" fill="#10c020" stroke="#0a7a18" stroke-width=".7"/></g>
</svg>

<!-- OK / Cancel -->
<div class="btn" style="left:1364px;top:789px;width:86px;height:23px;line-height:22px">OK</div>
<div class="btn" style="left:1460px;top:789px;width:85px;height:23px;line-height:22px">Cancel</div>
<svg style="left:1546px;top:807px" width="10" height="10"><path d="M8 2h1v1H8zM5 5h1v1H5zM8 5h1v1H8zM2 8h1v1H2zM5 8h1v1H5zM8 8h1v1H8z" fill="#999"/></svg>

<!-- annotations -->
<div style="left:743px;top:384px;width:160px;height:108px;border:3.500px solid #f00008;box-shadow:2px 2px 4px rgba(0,0,0,.5),inset 2px 2px 4px rgba(0,0,0,.35)"></div>
<div style="left:911px;top:404px;width:167px;height:55px;background:#ffffc8;border:2px solid #f00008;border-radius:12px;box-shadow:2px 2px 4px rgba(0,0,0,.5)"></div>
<div class="t" style="left:924px;top:413px;font-size:16px;line-height:18px;letter-spacing:.3px;-webkit-text-stroke:.2px #000">Skálázás, negatív</div>
<div class="t" style="left:929px;top:432px;font-size:16px;line-height:18px;letter-spacing:.3px;-webkit-text-stroke:.2px #000">értékek tükröznek</div>
<svg style="left:0;top:0;filter:drop-shadow(1px 1px 1.500px rgba(0,0,0,.4))" width="1200" height="220">
<polygon points="445,78 465,95 458,97 531.500,204 529,206 455,100 449,106" fill="#f00008"/>
<polygon points="1026,142 1051,133 1048,140 1150,141 1150,145 1048,145 1051,151" fill="#e80008"/>
</svg>
</body></html>
